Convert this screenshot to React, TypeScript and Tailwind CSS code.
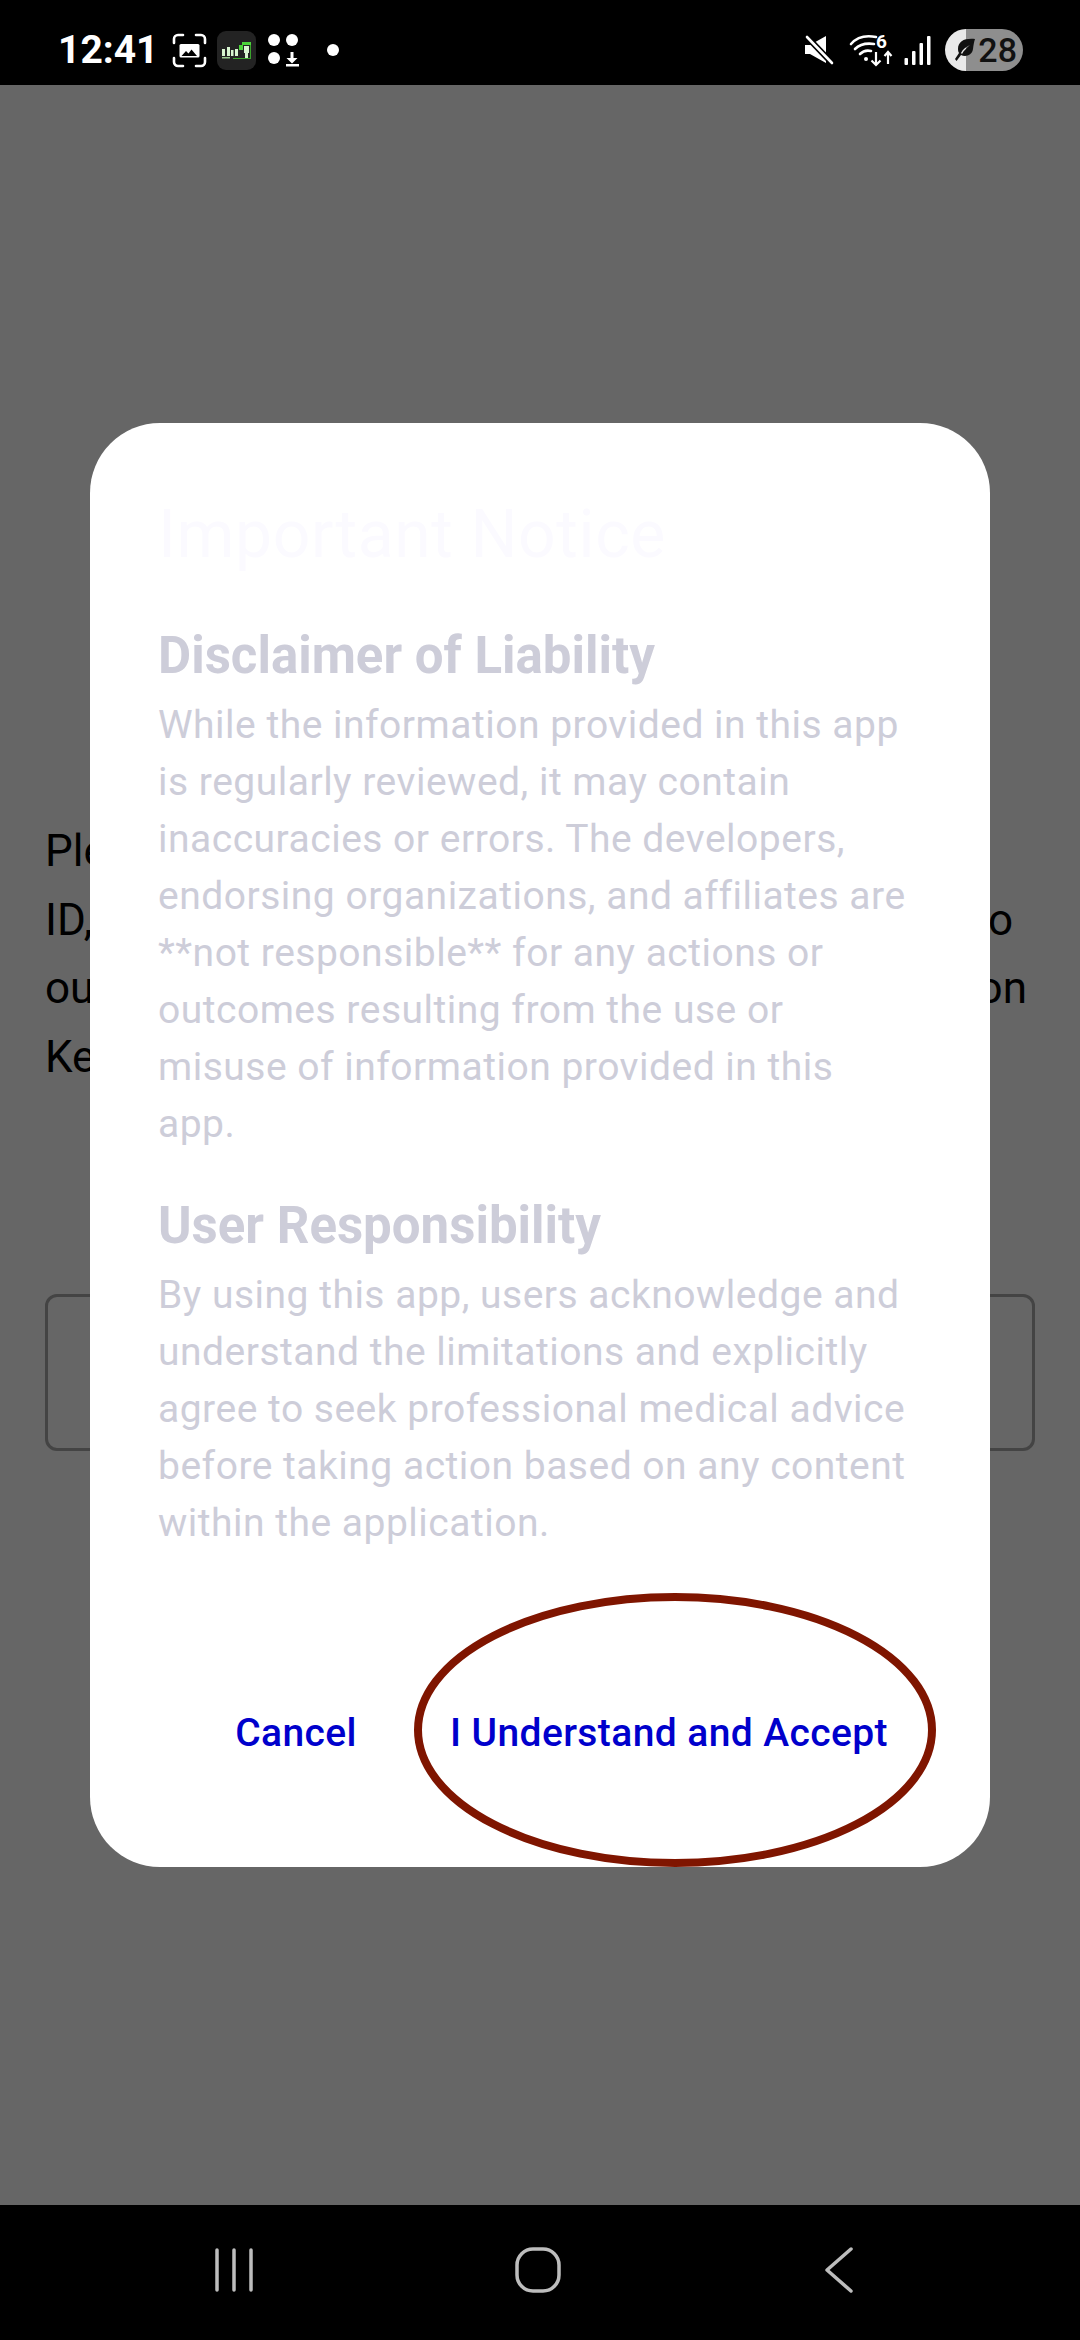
const bodyFont = { fontFamily: 'Roboto, sans-serif' };

function StatusLeft() {
  return (
    <div className="flex items-center">
      <span className="w-[96px] text-[39px] leading-none font-bold text-white font-['Roboto',sans-serif]">12:41</span>
      {/* screenshot */}
      <svg className="ml-[18px]" width="35" height="35" viewBox="0 0 35 35" fill="none">
        <path d="M2 10V6a4 4 0 0 1 4-4h5M24 2h5a4 4 0 0 1 4 4v4M33 25v4a4 4 0 0 1-4 4h-5M11 33H6a4 4 0 0 1-4-4v-4" stroke="#fff" strokeWidth="2.6" strokeLinecap="round" />
        <path d="M9 11h17a1.5 1.5 0 0 1 1.5 1.5V23A1.5 1.5 0 0 1 26 24.5H9A1.5 1.5 0 0 1 7.500 23V12.500A1.500 1.500 0 0 1 9 11z" fill="#fff" />
        <path d="M9.500 23l4.500-5 2.500 2.500 3-4 5.500 6.500z" fill="#000" />
      </svg>
      {/* app notification icon */}
      <svg className="ml-[10px]" width="39" height="39" viewBox="0 0 39 39">
        <rect width="39" height="39" rx="9" fill="#232323" />
        <rect x="5" y="18" width="3" height="7" fill="#d8f5d0" />
        <rect x="10" y="16" width="3" height="9" fill="#d8f5d0" />
        <rect x="14" y="19" width="2.500" height="6" fill="#d8f5d0" />
        <rect x="18" y="18" width="3" height="7" fill="#d8f5d0" />
        <rect x="5" y="26" width="8" height="1.500" fill="#9bc98f" />
        <rect x="22" y="14" width="4" height="5" fill="#4bd33a" />
        <rect x="27" y="15" width="5" height="7" fill="#d8f5d0" />
        <rect x="28" y="22" width="3" height="5" fill="#d8f5d0" />
        <rect x="25" y="11" width="9" height="3" fill="#4bd33a" />
        <rect x="16" y="27" width="17" height="1" fill="#3aa52c" />
        <rect x="33" y="14" width="1" height="14" fill="#3aa52c" />
      </svg>
      {/* grid with download */}
      <svg className="ml-[12px]" width="32" height="34" viewBox="0 0 32 34" fill="#fff">
        <circle cx="6" cy="7" r="6" />
        <circle cx="24" cy="7" r="6" />
        <circle cx="6" cy="25" r="6" />
        <path d="M22.500 19h3v6h4l-5.500 5.500L18.500 25h4z" />
        <rect x="18" y="31" width="13" height="2.500" />
      </svg>
      <span className="ml-[27px] w-[12px] h-[12px] rounded-full bg-white" />
    </div>
  );
}

function StatusRight() {
  return (
    <div className="flex items-center">
      {/* muted */}
      <svg width="31" height="30" viewBox="0 0 31 30" fill="#fff">
        <path d="M1 10h5L22 1v27L6 19H1z" />
        <path d="M3 2l25 26" stroke="#000" strokeWidth="6" />
        <path d="M3 2l25 26" stroke="#fff" strokeWidth="2.600" strokeLinecap="round" />
      </svg>
      {/* wifi */}
      <svg className="ml-[14px]" width="46" height="40" viewBox="0 0 46 40" fill="none" stroke="#fff">
        <path d="M2 14C8 7 17 5 27 7" strokeWidth="2.600" strokeLinecap="round" />
        <path d="M6 19c5-5 12-6 19-5" strokeWidth="2.600" strokeLinecap="round" />
        <path d="M11 24c3-3 7-4 11-3" strokeWidth="2.600" strokeLinecap="round" />
        <circle cx="17" cy="29" r="2" fill="#fff" stroke="none" />
        <text x="27" y="18" fill="#fff" stroke="none" fontSize="19" fontWeight="700" fontFamily="Roboto, sans-serif">6</text>
        <path d="M27 22v13M22.500 30.500l4.500 4.500 4.500-4.500" strokeWidth="2.200" />
        <path d="M39 34V22M35.500 26l3.500-4 3.500 4" strokeWidth="2.200" />
      </svg>
      {/* signal */}
      <svg className="ml-[9px]" width="28" height="29" viewBox="0 0 28 29" fill="#fff">
        <rect x="0.500" y="22" width="3.500" height="7" rx="1" />
        <rect x="8" y="15" width="3.500" height="14" rx="1" />
        <rect x="15.500" y="7" width="3.500" height="22" rx="1" />
        <rect x="23" y="0" width="3.500" height="29" rx="1" />
      </svg>
      {/* battery saver */}
      <div className="ml-[13px] w-[78px] h-[42px] rounded-full flex items-center justify-end pr-[6px] bg-[linear-gradient(90deg,#e9e9e9_27%,#8e8e8e_27%)]">
        <svg className="mr-[1px]" width="24" height="26" viewBox="0 0 24 26" fill="#111">
          <path d="M22 2C12 1 5 4 5 12c0 2 .500 3 1 4L2 22l1.500 2 4.500-6c4 2 11 1 12-6 .500-4 1-7 2-10zM8 16c2-4 5-6 9-8-3 3-6 5-8 9z" />
        </svg>
        <span className="text-[34px] leading-none font-medium text-[#111] font-['Roboto',sans-serif]">28</span>
      </div>
    </div>
  );
}

function NavBar() {
  return (
    <div className="h-[135px] bg-black flex items-center justify-between pl-[215px] pr-[227px] pb-[5px] shrink-0">
      <svg width="38" height="44" viewBox="0 0 38 44" stroke="#bdbdbd" strokeWidth="3.500" strokeLinecap="round">
        <path d="M2 2v40M19 2v40M36 2v40" />
      </svg>
      <svg className="mr-[3px]" width="46" height="46" viewBox="0 0 46 46" fill="none" stroke="#bdbdbd" strokeWidth="3.500">
        <rect x="2" y="2" width="42" height="42" rx="16" />
      </svg>
      <svg width="28" height="46" viewBox="0 0 28 46" fill="none" stroke="#bdbdbd" strokeWidth="3.500" strokeLinecap="round" strokeLinejoin="round">
        <path d="M26 2L2 23l24 21" />
      </svg>
    </div>
  );
}

function BackgroundPage() {
  return (
    <div className="px-[45px] pt-[732px] text-black text-[44px] leading-[68.500px]" style={bodyFont}>
      <div>Ple</div>
      <div className="flex justify-between pr-[22px]">
        <span>ID,</span>
        <span>o</span>
      </div>
      <div className="flex justify-between pr-[8px]">
        <span>ou</span>
        <span>on</span>
      </div>
      <div>Ke</div>
      <div className="mt-[203px] h-[157px] border-[3px] border-[#444] rounded-[12px]" />
    </div>
  );
}

function Notice() {
  return (
    <div className="absolute inset-0 flex items-center justify-center">
      <div className="relative w-[900px] h-[1444px] bg-white rounded-[70px] pt-[76px] pl-[68px] pr-[77px]" style={bodyFont}>
        <h1 className="text-[66px] leading-[72px] tracking-[0.6px] text-[#fbfaff]">Important Notice</h1>
        <h2 className="mt-[57px] text-[51px] leading-[56px] font-bold text-[#cdcdd9]">Disclaimer of Liability</h2>
        <p className="mt-[13px] text-[39px] leading-[57px] tracking-[0.5px] text-[#cdcdd9]">
          While the information provided in this app is regularly reviewed, it may contain inaccuracies or errors. The developers, endorsing organizations, and affiliates are **not responsible** for any actions or outcomes resulting from the use or misuse of information provided in this app.
        </p>
        <h2 className="mt-[45px] text-[51px] leading-[56px] font-bold text-[#cdcdd9]">User Responsibility</h2>
        <p className="mt-[13px] text-[39px] leading-[57px] tracking-[0.5px] text-[#cdcdd9]">
          By using this app, users acknowledge and understand the limitations and explicitly agree to seek professional medical advice before taking action based on any content within the application.
        </p>
        <div className="mt-[153px] -mr-[11px] flex justify-end pr-[36px] text-[39px] leading-[57px] font-medium tracking-[0.4px] text-[#0000cc]">
          <button>Cancel</button>
          <button className="ml-[93px]">I Understand and Accept</button>
        </div>
        {/* red annotation ring */}
        <svg className="absolute left-[324px] top-[1170px]" width="522" height="274" viewBox="0 0 522 274" fill="none">
          <ellipse cx="261" cy="137" rx="257" ry="133" stroke="#7f1500" strokeWidth="8" />
        </svg>
      </div>
    </div>
  );
}

export default function App() {
  return (
    <div className="w-[1080px] h-[2340px] flex flex-col overflow-hidden">
      <div className="h-[85px] bg-black flex items-center justify-between pl-[58px] pr-[57px] pt-[15px] shrink-0">
        <StatusLeft />
        <StatusRight />
      </div>
      <div className="relative flex-1 bg-[#666666]">
        <BackgroundPage />
        <Notice />
      </div>
      <NavBar />
    </div>
  );
}
